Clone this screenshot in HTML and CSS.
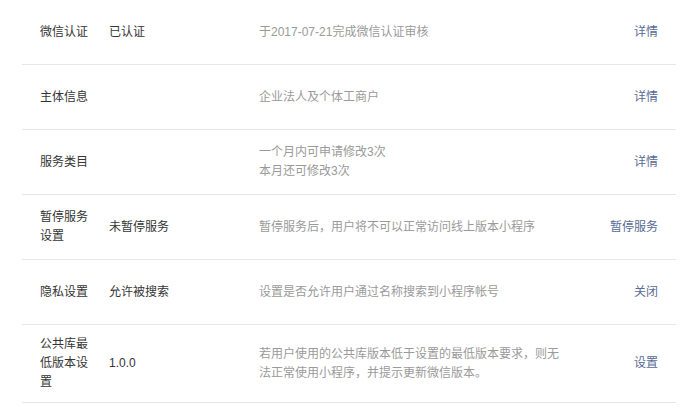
FILE: index.html
```html
<!DOCTYPE html>
<html lang="zh-CN">
<head>
    <meta charset="UTF-8">
    <meta name="viewport" content="width=device-width, initial-scale=1.0">
    <title>设置</title>
    <link rel="stylesheet" href="styles.css">
</head>
<body>
    <div class="setting-list">
        <div class="setting-row">
            <div class="label">微信认证</div>
            <div class="value">已认证</div>
            <div class="desc">于2017-07-21完成微信认证审核</div>
            <div class="action"><a href="#">详情</a></div>
        </div>
        <div class="setting-row">
            <div class="label">主体信息</div>
            <div class="value"></div>
            <div class="desc">企业法人及个体工商户</div>
            <div class="action"><a href="#">详情</a></div>
        </div>
        <div class="setting-row">
            <div class="label">服务类目</div>
            <div class="value"></div>
            <div class="desc">一个月内可申请修改3次<br>本月还可修改3次</div>
            <div class="action"><a href="#">详情</a></div>
        </div>
        <div class="setting-row">
            <div class="label">暂停服务设置</div>
            <div class="value">未暂停服务</div>
            <div class="desc">暂停服务后，用户将不可以正常访问线上版本小程序</div>
            <div class="action"><a href="#">暂停服务</a></div>
        </div>
        <div class="setting-row">
            <div class="label">隐私设置</div>
            <div class="value">允许被搜索</div>
            <div class="desc">设置是否允许用户通过名称搜索到小程序帐号</div>
            <div class="action"><a href="#">关闭</a></div>
        </div>
        <div class="setting-row">
            <div class="label">公共库最低版本设置</div>
            <div class="value">1.0.0</div>
            <div class="desc">若用户使用的公共库版本低于设置的最低版本要求，则无法正常使用小程序，并提示更新微信版本。</div>
            <div class="action"><a href="#">设置</a></div>
        </div>
    </div>
</body>
</html>
```

FILE: styles.css
```css
body {
    margin: 0;
    font-family: "Liberation Sans", "Noto Sans CJK SC", sans-serif;
    font-size: 12px;
    line-height: 19px;
    color: #353535;
    background-color: #fff;
}
.setting-list {
    margin: 0 14px 0 22px;
}
.setting-row {
    display: flex;
    align-items: center;
    box-sizing: border-box;
    min-height: 65px;
    padding: 10px 18px;
    border-bottom: 1px solid #e7e7e7;
}
.label {
    width: 50px;
    margin-right: 19px;
    word-break: break-all;
}
.value {
    width: 150px;
}
.desc {
    width: 305px;
    color: #9a9a9a;
}
.action {
    flex: 1;
    text-align: right;
}
.action a {
    color: #576b95;
    text-decoration: none;
}
```
